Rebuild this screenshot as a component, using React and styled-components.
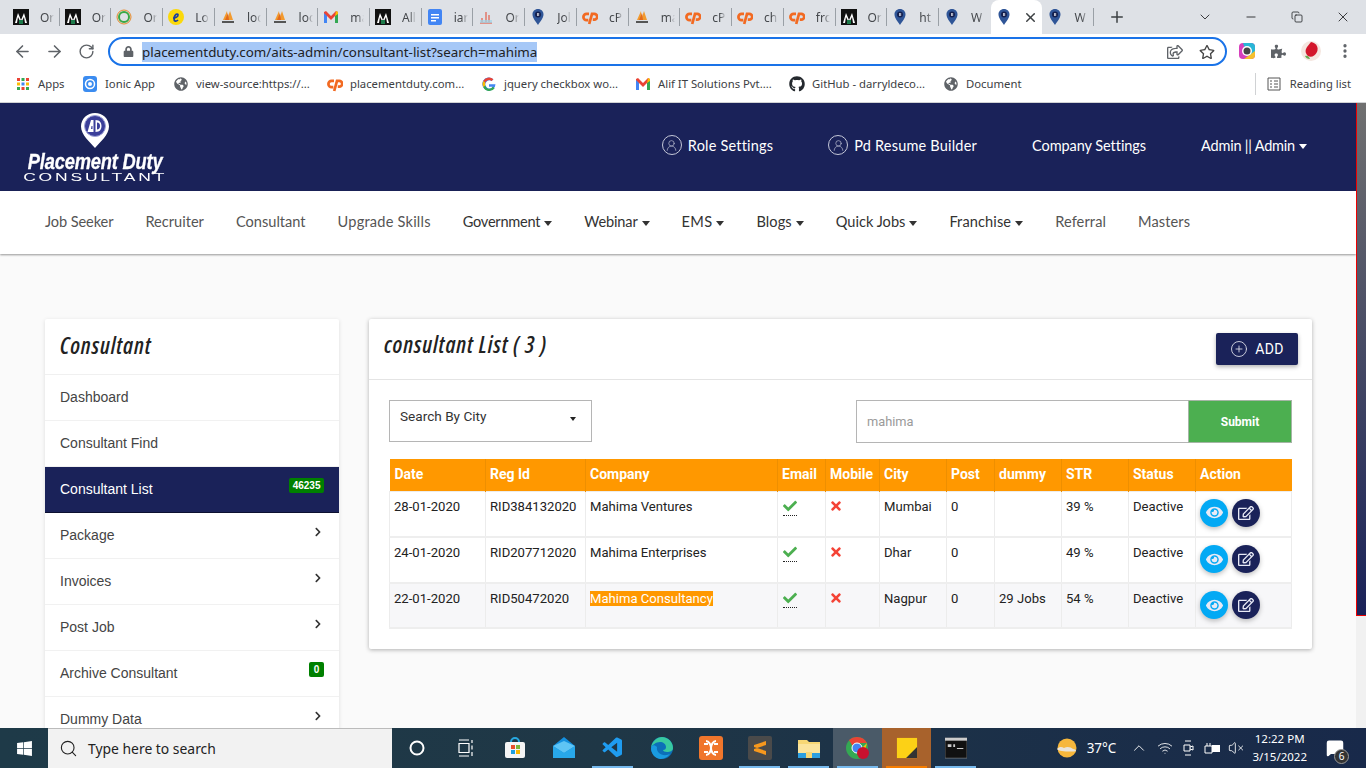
import React from "react";
import styled, { createGlobalStyle } from "styled-components";
import { FaWindows, FaGithub, FaGlobeAmericas, FaChevronRight, FaCheck, FaTimes, FaEye, FaRegEdit, FaPuzzlePiece, FaLock, FaRegStar, FaRegShareSquare } from "react-icons/fa";
import { VscVscode } from "react-icons/vsc";
import { ArrowLeft, ArrowRight, RotateCw, EllipsisVertical, Minus, X, Plus, ChevronDown, Copy, CirclePlus, UserRound, Search, ChevronUp, Wifi, VolumeX, MessageSquare } from "lucide-react";

const NAVY = "#1a2259";
const ORANGE = "#ff9800";

const Global = createGlobalStyle`
  * { box-sizing: border-box; }
  html, body { margin: 0; padding: 0; height: 100%; overflow: hidden; }
  body { font-family: "Liberation Sans", Arial, sans-serif; background: #fafafa; }
`;

const Screen = styled.div`
  width: 1366px; height: 768px; display: flex; flex-direction: column; overflow: hidden;
`;

/* Browser chrome */
const TabStrip = styled.div`
  height: 34px; background: #dee1e6; display: flex; align-items: center; padding-left: 8px; flex: none;
`;
const Tab = styled.div`
  width: 51.72px; height: 34px; display: flex; align-items: center; padding-left: 5px; position: relative; flex: none;
  background: ${p => (p.$active ? "#fff" : "transparent")};
  border-radius: ${p => (p.$active ? "8px 8px 0 0" : "0")};
  &::after {
    content: ""; position: absolute; right: 0; top: 8px; height: 18px; width: 1px;
    background: ${p => (p.$plain ? "transparent" : "#9aa0a6")};
  }
`;
const TabIcon = styled.span`
  width: 16px; height: 16px; display: flex; flex: none;
`;
const TabTitle = styled.span`
  margin-left: 11px; font: 12px "Noto Sans", sans-serif; color: #45484c; width: 14px; overflow: hidden; white-space: nowrap;
  -webkit-mask-image: linear-gradient(90deg, #000 55%, transparent);
  mask-image: linear-gradient(90deg, #000 55%, transparent);
`;
const TabClose = styled.span`
  margin-left: 11px; display: flex; color: #3c4043;
`;
const NewTab = styled.span`
  margin-left: 14px; display: flex; color: #3c4043;
`;
const WinControls = styled.div`
  margin-left: auto; display: flex; align-items: center; color: #202124; height: 100%;
`;
const WinBtn = styled.span`
  width: 46px; display: flex; justify-content: center;
`;
const Toolbar = styled.div`
  height: 34px; background: #fff; display: flex; align-items: center; flex: none; padding-left: 6px;
`;
const NavBtn = styled.span`
  width: 32px; display: flex; justify-content: center; color: ${p => p.$dim || "#5f6368"};
`;
const Omnibox = styled.div`
  width: 1119px; height: 29px; margin-left: 6px; border: 2px solid #1a73e8; border-radius: 15px; display: flex; align-items: center; padding: 1px 10px 0 13px; color: #5f6368;
`;
const UrlText = styled.span`
  margin-left: 8px; font: 13.35px/20px "Noto Sans", sans-serif; color: #202124; background: #a6c8f7; white-space: nowrap;
`;
const OmniEnd = styled.div`
  margin-left: auto; display: flex; align-items: center; gap: 16px; color: #5f6368;
`;
const ExtGroup = styled.div`
  display: flex; align-items: center; margin-left: 11px; gap: 15px; color: #5f6368;
`;
const Bookmarks = styled.div`
  height: 35px; background: #fff; display: flex; align-items: center; flex: none; padding: 0 15px 3px 15px; border-bottom: 1px solid #d0d2d4; position: relative;
`;
const Bookmark = styled.div`
  width: 154px; display: flex; align-items: center; gap: 7px; font: 11.3px "Noto Sans", sans-serif; color: #3c4043; white-space: nowrap; flex: none;
  &:first-child { width: 67px; }
  &:nth-child(2) { width: 91px; }
`;
const BmIcon = styled.span`
  width: 16px; height: 16px; display: flex; align-items: center; justify-content: center; color: #5f6368; flex: none;
`;
const Reading = styled.div`
  margin-left: auto; display: flex; align-items: center; gap: 9px; font: 11.2px "Noto Sans", sans-serif; color: #3c4043; padding-left: 11px; border-left: 1px solid #d0d2d4; height: 22px;
`;

/* Page */
const Viewport = styled.div`
  flex: 1; min-height: 0; display: flex; overflow: hidden;
`;
const Page = styled.div`
  flex: 1; min-width: 0; background: #fafafa; overflow: hidden;
`;
const ScrollTrack = styled.div`
  width: 10px; flex: none; background: #f1f1f1;
`;
const ScrollThumb = styled.div`
  height: 513px; background: linear-gradient(180deg, #707070, ${NAVY}); border: 1px solid #e00; border-top: 0; border-right: 0;
`;
const Header = styled.header`
  height: 88px; background: ${NAVY}; display: flex; align-items: flex-start; justify-content: space-between; padding: 0 49px 0 25px;
`;
const Logo = styled.div`
  width: 140px; display: flex; flex-direction: column; align-items: center; color: #fff; padding-top: 10px;
`;
const LogoName = styled.div`
  font: italic bold 22px/19px "Liberation Sans", sans-serif; white-space: nowrap; transform: scaleX(0.83); margin-top: 4px; letter-spacing: -0.2px; -webkit-text-stroke: .3px #fff;
`;
const LogoSub = styled.div`
  font: 10px/10px "Liberation Sans", sans-serif; letter-spacing: 1.6px; white-space: nowrap; transform: scaleX(1.75); margin-top: 2px;
`;
const TopLinks = styled.nav`
  display: flex; align-items: center; gap: 55px; height: 84px;
`;
const TopLink = styled.a`
  display: flex; align-items: center; gap: 6px; color: #fff; font: 14.5px Lato, sans-serif; letter-spacing: ${p => p.$ls || 0}px; white-space: nowrap;
`;
const UserRing = styled.span`
  width: 20px; height: 20px; border: 1px solid #c5c8d8; border-radius: 50%; display: flex; align-items: center; justify-content: center; color: #c5c8d8;
`;
const Caret = styled.span`
  display: inline-block; width: 0; height: 0; margin-left: 4px; vertical-align: middle; border-left: 4.5px solid transparent; border-right: 4.5px solid transparent; border-top: 5px solid currentColor;
`;
const MainNav = styled.nav`
  height: 63px; background: #fff; display: flex; align-items: center; gap: 32px; padding: 0 0 2px 45px; box-shadow: 0 1px 2px rgba(0,0,0,.4); position: relative;
`;
const MainLink = styled.a`
  font: 14.6px Lato, sans-serif; white-space: nowrap; letter-spacing: ${p => p.$ls || 0}px; color: ${p => (p.$drop ? "#333" : "#555")};
`;
const Columns = styled.div`
  display: flex; align-items: flex-start; gap: 30px; padding: 65px 44px 0 45px;
`;
const Sidebar = styled.aside`
  width: 294px; flex: none; background: #fff; border-radius: 2px; box-shadow: 0 1px 4px rgba(0,0,0,.12);
`;
const SideTitle = styled.h2`
  margin: 0; height: 56px; padding: 0 15px 4px; display: flex; align-items: center; font: italic 600 23px "Open Sans", sans-serif; font-stretch: 75%; letter-spacing: .85px; color: #222; border-bottom: 1px solid #f0f0f0;
`;
const SideRow = styled.div`
  height: 46px; padding: 0 15px 2px; display: flex; align-items: center; justify-content: space-between; font: 14px "Liberation Sans", sans-serif;
  color: ${p => (p.$active ? "#fff" : "#444")};
  background: ${p => (p.$active ? NAVY : "#fff")};
  border-bottom: 1px solid ${p => (p.$active ? "#0c1030" : "#f1f1f1")};
`;
const SideBadge = styled.span`
  background: green; color: #fff; font: bold 10px/15px "Liberation Sans", sans-serif; padding: 0 3.5px; border-radius: 2px; margin-top: -6px; min-width: 15px; text-align: center;
`;
const SideChevron = styled.span`
  display: flex; color: #333; margin: -5px 1px 0 0;
`;
const Card = styled.section`
  flex: 1; min-width: 0; background: #fff; border-radius: 2px; box-shadow: 0 1px 4px rgba(0,0,0,.3); padding-bottom: 20px;
`;
const CardHead = styled.div`
  height: 61px; display: flex; align-items: flex-start; justify-content: space-between; padding: 14px 14px 0 15px; border-bottom: 1px solid #e4e4e4;
`;
const CardTitle = styled.h1`
  margin: 0; font: italic 600 23px/22px "Open Sans", sans-serif; font-stretch: 75%; letter-spacing: .85px; color: #222; white-space: nowrap;
`;
const AddButton = styled.button`
  width: 82px; height: 32px; border: 0; border-radius: 2px; background: ${NAVY}; color: #fff; display: flex; align-items: center; justify-content: center; gap: 7px; padding: 0 0 1px; font: 14px Roboto, sans-serif; letter-spacing: .3px; box-shadow: 0 2px 4px rgba(0,0,0,.3);
  svg { color: #d7d8e4; }
`;
const CardBody = styled.div`
  padding: 20px 20px 0;
`;
const Filters = styled.div`
  display: flex; justify-content: space-between; align-items: flex-start; margin-bottom: 16px;
`;
const SelectBox = styled.div`
  width: 203px; height: 42px; border: 1px solid #b5b5b5; padding: 7px 10px; font: 13.6px Roboto, sans-serif; color: #333; display: flex; justify-content: space-between;
`;
const SelectCaret = styled.span`
  width: 0; height: 0; margin: 9px 5px 0 0; border-left: 3.5px solid transparent; border-right: 3.5px solid transparent; border-top: 4px solid #222;
`;
const SearchGroup = styled.div`
  display: flex; height: 43px;
`;
const SearchInput = styled.div`
  width: 332px; border: 1px solid #b5b5b5; border-right: 0; padding: 0 10px; display: flex; align-items: center; font: 12.8px Roboto, sans-serif; color: #9a9a9a;
`;
const SubmitButton = styled.button`
  width: 104px; border: 1px solid #a5b5a5; background: #4caf50; color: #fff; font: bold 12px Roboto, sans-serif;
`;
const Table = styled.table`
  width: 902px; border-collapse: collapse; table-layout: fixed; font: 13.1px Roboto, sans-serif; color: #222;
`;
const Th = styled.th`
  height: 32px; background: ${ORANGE}; color: #fff; font: bold 14px Roboto, sans-serif; text-align: left; padding: 0 4px 1px; border-left: 1px solid #ee8f00; white-space: nowrap;
  &:first-child { border-left: 0; padding-left: 5px; }
`;
const Tr = styled.tr`
  height: 46px; background: ${p => (p.$alt ? "#f7f7f9" : "#fff")};
  &:last-child { height: 45px; }
`;
const Td = styled.td`
  vertical-align: top; padding: 7px 4px 0 4px; border: 1px solid #ececec; border-bottom: 2px solid #eee; white-space: nowrap;
`;
const Mark = styled.mark`
  background: ${ORANGE}; color: #fff;
`;
const CheckAbbr = styled.abbr`
  display: inline-flex; color: #4caf50; border-bottom: 1px dotted #222; padding-bottom: 2px; width: 14px; margin-left: 1px;
`;
const Cross = styled.span`
  display: inline-flex; color: #f44336; margin-left: -1px;
`;
const Actions = styled.div`
  display: flex; gap: 4px;
`;
const RoundBtn = styled.span`
  width: 28px; height: 28px; border-radius: 50%; display: flex; align-items: center; justify-content: center; color: #e8eaf6; background: ${p => p.$bg}; box-shadow: 0 2px 5px rgba(0,0,0,.25);
`;

/* Taskbar */
const Taskbar = styled.div`
  height: 40px; flex: none; background: linear-gradient(90deg, #1e3a48, #1f3746 45%, #18294a); display: flex; align-items: stretch; color: #fff;
`;
const StartBtn = styled.span`
  width: 48px; display: flex; align-items: center; justify-content: center;
`;
const SearchBar = styled.div`
  width: 344px; background: #f2f2f2; display: flex; align-items: center; gap: 10px; padding-left: 11px; color: #222; font: 13.9px "Noto Sans", sans-serif; border-top: 1px solid #bbb;
`;
const Tray = styled.div`
  display: flex; align-items: stretch;
`;
const TaskItem = styled.span`
  width: 49px; display: flex; align-items: center; justify-content: center; position: relative; flex: none;
  background: ${p => p.$bg || "transparent"};
  &::after {
    content: ""; position: absolute; left: 4px; right: 4px; bottom: 0; height: 2px;
    background: ${p => p.$line || "transparent"};
  }
`;
const SysArea = styled.div`
  margin-left: auto; display: flex; align-items: center; color: #fff; font: 15px "Noto Sans", sans-serif; padding-right: 22px;
`;
const Temp = styled.span`
  margin: 0 14px 0 10px; font-size: 13.5px;
`;
const SysIcons = styled.div`
  display: flex; align-items: center; gap: 7px; margin-right: 8px;
  & > svg:first-child { margin-right: 2px; }
`;
const Clock = styled.div`
  display: flex; flex-direction: column; align-items: center; font: 11.5px/18px "Noto Sans", sans-serif; margin-right: 19px;
`;
const Notif = styled.span`
  position: relative; display: flex;
`;
const NotifBadge = styled.span`
  position: absolute; right: -5px; bottom: -7px; width: 15px; height: 15px; border-radius: 50%; background: #333; border: 1px solid #999; font: 10px/13px "Noto Sans", sans-serif; text-align: center; color: #fff;
`;

/* Drawn marks */
const Svg = ({ s = 16, children, vb = "0 0 16 16" }) => <svg width={s} height={s} viewBox={vb}>{children}</svg>;
const MFav = () => <Svg><rect width="16" height="16" fill="#111" /><path d="M2 14 5 4l3 7 3-7 3 10h-2l-1-6-3 6-3-6-1 6z" fill="#fff" /><rect x="6" y="11" width="4" height="4" fill="#1c7a4a" /></Svg>;
const RingFav = () => <Svg><circle cx="8" cy="8" r="7" fill="none" stroke="#e88a2a" strokeWidth="1" /><circle cx="8" cy="8" r="5" fill="none" stroke="#3aa845" strokeWidth="2" /></Svg>;
const EFav = () => <Svg><circle cx="8" cy="8" r="8" fill="#fbd90b" /><path d="M5 9c2 0 5-1 5-3 0-1.400-2-1-3 .5S5.500 11 7 12c1 .500 2 0 3-1" fill="none" stroke="#1b3fa0" strokeWidth="1.700" /></Svg>;
const PmaFav = () => <Svg><path d="M3 11 7 2l1 9zM7 11l3-9 3 9z" fill="#f29a2e" /><path d="M5 11 8 4l1 7z" fill="#e2691c" /><rect x="2" y="12" width="12" height="2" fill="#555" /></Svg>;
const GmailFav = () => <Svg><path d="M1 14V3l2-1 5 5 5-5 2 1v11h-3V7L8 11 4 7v7z" fill="#ea4335" /><path d="M1 14V4l3 3v7z" fill="#4285f4" /><path d="M15 14V4l-3 3v7z" fill="#34a853" /><path d="M13 2l2 1v2l-3 2z" fill="#fbbc04" /></Svg>;
const DocsFav = () => <Svg><rect x="1" width="14" height="16" rx="2" fill="#4285f4" /><path d="M4 5h8v1.500H4zM4 8h8v1.500H4zM4 11h5v1.500H4z" fill="#fff" /></Svg>;
const ChartFav = () => <Svg><path d="M2 14h12M4 13V9M8 13V3M11 13V6" stroke="#e2786a" strokeWidth="1.500" fill="none" /><path d="M2 11h12v3H2z" fill="#9fd4e8" opacity=".7" /></Svg>;
const PinFav = () => <Svg><path d="M8 0c3.300 0 5.500 2.400 5.500 5.500C13.500 9 10 13 8 16 6 13 2.500 9 2.500 5.500 2.500 2.400 4.700 0 8 0z" fill="#2f5597" /><circle cx="8" cy="5.500" r="3" fill="#14204f" /><path d="M7 4h.7v3H7zM8.400 4h.7v3h-.7z" fill="#fff" /></Svg>;
const CpFav = () => <Svg><path d="M7 4.800H4.600a3.200 3.200 0 0 0 0 6.400H6.300M7.200 15 10 4.800h2.300a2.900 2.900 0 0 1 0 5.800H10.800" fill="none" stroke="#f26a22" strokeWidth="2.700" /></Svg>;
const AppsIcon = () => (
  <Svg>{[0, 1, 2].flatMap(r => [0, 1, 2].map(c => <rect key={`${r}${c}`} x={2 + c * 4.500} y={2 + r * 4.500} width="3" height="3" fill={["#ea4335", "#fbbc04", "#34a853", "#4285f4"][(r + c * 2) % 4]} />))}</Svg>
);
const IonicIcon = () => <Svg><rect x="1" width="14" height="16" rx="3" fill="#3b8cf0" /><circle cx="8" cy="8" r="4.500" fill="none" stroke="#fff" strokeWidth="1.500" /><circle cx="8" cy="8" r="2" fill="#fff" /></Svg>;
const GoogleIcon = () => <Svg><path d="M14.500 8.200H8v2.500h3.700A4 4 0 1 1 10.600 5l1.800-1.800A6.600 6.600 0 1 0 14.500 8.200z" fill="#4285f4" /><path d="M2.200 5 4.300 6.600A4 4 0 0 1 10.600 5l1.800-1.800A6.600 6.600 0 0 0 2.200 5z" fill="#ea4335" /><path d="M2.200 11 4.300 9.400a4 4 0 0 0 7.400 1.300l2 1.500A6.600 6.600 0 0 1 2.200 11z" fill="#34a853" /><path d="M2.200 5a6.600 6.600 0 0 0 0 6l2.100-1.600a4 4 0 0 1 0-2.800z" fill="#fbbc04" /></Svg>;
const ReadingIcon = () => <Svg s={14} vb="0 0 14 14"><path d="M1 1h12v12H1zM3 4h2M3 7h2M3 10h2M7 4h4M7 7h4M7 10h4" fill="none" stroke="#555" /></Svg>;
const LogoPin = () => (
  <svg width="28" height="35" viewBox="0 0 28 35">
    <path d="M14 0c7.700 0 14 5.800 14 13.500C28 22 19 29 14 35 9 29 0 22 0 13.500 0 5.800 6.300 0 14 0z" fill="#fff" />
    <circle cx="14" cy="13" r="10.500" fill="#3b3f9a" stroke="#9ea2d8" />
    <path d="M6.500 19 10 7h2.500v12zM14.500 7c4.500 0 6 3 6 6s-1.500 6-6 6z" fill="#fff" />
    <path d="M10.500 13h1v3h-1.500zM16 9.500c2 0 3 1.500 3 3.500s-1 3.500-3 3.500z" fill="#3b3f9a" />
  </svg>
);
const RedAvatar = () => <Svg s={20} vb="0 0 20 20"><circle cx="10" cy="10" r="10" fill="#f5e6e0" /><path d="M10 1c5 1 8 5 6 10-2 4-6 6-9 4-3-3-3-6-1-9z" fill="#d3162b" /><path d="M4 15c2-1 4 0 5 3-3 0-4-1-5-3z" fill="#6aa84f" /></Svg>;
const ColorExt = () => <Svg s={18} vb="0 0 18 18"><rect x="1" y="1" width="16" height="16" rx="4" fill="#d63fbd" /><path d="M5 1h8a4 4 0 0 1 4 4v8H9z" fill="#29b6d6" /><path d="M17 9v4a4 4 0 0 1-4 4H6z" fill="#f6c02c" /><circle cx="9" cy="9" r="5" fill="#fff" /><circle cx="9" cy="9" r="3.500" fill="#444" /></Svg>;

const Store = () => <Svg s={24} vb="0 0 24 24"><path d="M8 6a4 4 0 0 1 8 0" fill="none" stroke="#27a8e0" strokeWidth="2" /><rect x="2" y="6" width="20" height="16" rx="2" fill="#f5f5f5" /><rect x="8" y="9" width="4" height="4" fill="#e8502c" /><rect x="13" y="9" width="4" height="4" fill="#7db83a" /><rect x="8" y="14" width="4" height="4" fill="#1e9fe0" /><rect x="13" y="14" width="4" height="4" fill="#f8b600" /></Svg>;
const Mail = () => <Svg s={24} vb="0 0 24 24"><path d="M1 10 12 1l11 9v12H1z" fill="#1490df" /><path d="M1 10l11 7 11-7-11-5z" fill="#5fc5f5" /><path d="M1 10l11 7 11-7v12H1z" fill="#28a8ea" /></Svg>;
const Edge = () => <Svg s={24} vb="0 0 24 24"><circle cx="12" cy="12" r="11" fill="#0c6fb8" /><path d="M1 12C2 5 7 1 12 1c6 0 11 5 11 11 0 3-3 4-6 4-2 0-4-1-4-2 2 0 3-1 3-3 0-3-3-5-6-5-4 0-8 3-9 6z" fill="#38c9a0" /><path d="M7 11c-1 5 4 9 10 8 1 0 2-1 3-1-3 4-7 5-10 5-5-1-9-5-9-11 1-3 3-4 6-1z" fill="#1a9be0" /></Svg>;
const Xampp = () => <Svg s={24} vb="0 0 24 24"><rect width="24" height="24" rx="3" fill="#f0762c" /><path d="M7 5c3 0 5 4 5 7s2 7 5 7M17 5c-3 0-5 4-5 7s-2 7-5 7M5 8h4M15 8h4M5 16h4M15 16h4" fill="none" stroke="#fff" strokeWidth="2" /></Svg>;
const Sublime = () => <Svg s={24} vb="0 0 24 24"><rect width="24" height="24" rx="2" fill="#4a4a4a" /><path d="M6 9l12-4v4L6 13zM18 15 6 11v4l12 4z" fill="#f8981d" /></Svg>;
const Folder = () => <Svg s={24} vb="0 0 24 24"><path d="M1 4h9l2 2h11v16H1z" fill="#f7d774" /><rect x="1" y="8" width="22" height="14" fill="#fbe49c" /><rect x="1" y="17" width="22" height="5" fill="#2c9fe0" /><rect x="9" y="16" width="6" height="6" fill="#f7d774" /></Svg>;
const ChromeApp = () => <Svg s={26} vb="0 0 26 26"><circle cx="12" cy="13" r="11" fill="#34a853" /><path d="M12 2a11 11 0 0 1 10 6H12a5 5 0 0 0-4.500 3L4 5a11 11 0 0 1 8-3z" fill="#ea4335" /><circle cx="12" cy="13" r="5" fill="#4285f4" stroke="#fff" /><path d="M22 8l-3 12-5-4z" fill="#fbbc04" /><circle cx="18" cy="18" r="6" fill="#c8102e" /></Svg>;
const Sticky = () => <Svg s={22} vb="0 0 24 24"><rect x="1" y="1" width="22" height="22" fill="#fcd116" /><path d="M23 11v12H11z" fill="#333" /></Svg>;
const Cmd = () => <Svg s={22} vb="0 0 24 24"><rect x="0" y="1" width="24" height="22" fill="#111" stroke="#999" strokeWidth=".6" /><rect x="0" y="1" width="24" height="3" fill="#ccc" /><path d="M3 8h4v3H3zM9 8h2v3H9zM13 12h7v1h-7z" fill="#ccc" /></Svg>;
const TaskView = () => <Svg s={18} vb="0 0 18 18"><path d="M2 1h10M2 17h10M2 4.500h10v9H2zM15 1v3M15 6.500v4M15 13v4" fill="none" stroke="#fff" strokeWidth="1.200" /></Svg>;
const Ring = () => <Svg s={16}><circle cx="8" cy="8" r="6.500" fill="none" stroke="#fff" strokeWidth="2" /></Svg>;
const Weather = () => <Svg s={20} vb="0 0 20 20"><circle cx="10" cy="10" r="9.500" fill="#f6b73c" /><path d="M0 11c3-3 5-2 7-1 3-2 7-1 9 1 2 0 3 1 3 2-2 1-17 1-19-2z" fill="#e9e4da" /></Svg>;
const Battery = () => <Svg s={18} vb="0 0 18 18"><path d="M4 4v3M7 4v3M2 7h7v7H2z" fill="none" stroke="#fff" /><rect x="9" y="6" width="8" height="7" fill="#fff" /></Svg>;
const Meet = () => <Svg s={16}><path d="M5 1h6M5 15h6M4 5h6v6H4zM10 7l3-1v4l-3-1" fill="none" stroke="#fff" /></Svg>;

const favs = { m: MFav, r: RingFav, e: EFav, p: PmaFav, g: GmailFav, d: DocsFav, c: ChartFav, i: PinFav, x: CpFav };
const tabs = [["m","Or"],["m","Or"],["r","Or"],["e","Lo"],["p","loc"],["p","loc"],["g","ma"],["m","All"],["d","iar"],["c","Or"],["i","Jol"],["x","cP"],["p","ma"],["x","cP"],["x","ch"],["x","frc"],["m","Or"],["i","ht"],["i","W"],["i","",true],["i","W"]];
const bookmarks = [
  [<AppsIcon />, "Apps"], [<IonicIcon />, "Ionic App"], [<FaGlobeAmericas size={14} />, "view-source:https://..."],
  [<CpFav />, "placementduty.com..."], [<GoogleIcon />, "jquery checkbox wo..."], [<GmailFav />, "Alif IT Solutions Pvt...."],
  [<FaGithub size={16} color="#24292e" />, "GitHub - darryldeco..."], [<FaGlobeAmericas size={14} />, "Document"],
];
const navItems = [
  { t: "Job Seeker", ls: -0.1 }, { t: "Recruiter" }, { t: "Consultant" }, { t: "Upgrade Skills", ls: 0.2 },
  { t: "Government", d: 1, ls: -0.25 }, { t: "Webinar", d: 1, ls: -0.15 }, { t: "EMS", d: 1, ls: 0.3 }, { t: "Blogs", d: 1, ls: 0.1 },
  { t: "Quick Jobs", d: 1 }, { t: "Franchise", d: 1, ls: 0.1 }, { t: "Referral", ls: 0.1 }, { t: "Masters", ls: 0.1 },
];
const sideItems = [
  { t: "Dashboard" }, { t: "Consultant Find" }, { t: "Consultant List", a: 1, b: "46235" }, { t: "Package", c: 1 },
  { t: "Invoices", c: 1 }, { t: "Post Job", c: 1 }, { t: "Archive Consultant", b: "0" }, { t: "Dummy Data", c: 1 },
];
const cols = [96, 100, 192, 48, 54, 67, 48, 67, 67, 67, 96];
const heads = ["Date","Reg Id","Company","Email","Mobile","City","Post","dummy","STR","Status","Action"];
const rows = [
  ["28-01-2020","RID384132020","Mahima Ventures","Mumbai","0","","39 %"],
  ["24-01-2020","RID207712020","Mahima Enterprises","Dhar","0","","49 %"],
  ["22-01-2020","RID50472020",<Mark>Mahima Consultancy</Mark>,"Nagpur","0","29 Jobs","54 %"],
];

export default function App() {
  return (
    <Screen>
      <Global />
      <TabStrip>
        {tabs.map(([k, title, active], i) => {
          const F = favs[k];
          return (
            <Tab key={i} $active={active} $plain={active || i === 18}>
              <TabIcon><F /></TabIcon>
              {active ? <TabClose><X size={15} strokeWidth={2.4} /></TabClose> : <TabTitle>{title}</TabTitle>}
            </Tab>
          );
        })}
        <NewTab><Plus size={18} strokeWidth={2} /></NewTab>
        <WinControls>
          <WinBtn><ChevronDown size={16} strokeWidth={1.3} /></WinBtn>
          <WinBtn><Minus size={14} strokeWidth={1.5} /></WinBtn>
          <WinBtn><Copy size={12} strokeWidth={1.6} /></WinBtn>
          <WinBtn><X size={16} strokeWidth={1.3} /></WinBtn>
        </WinControls>
      </TabStrip>
      <Toolbar>
        <NavBtn><ArrowLeft size={19} strokeWidth={2} /></NavBtn>
        <NavBtn><ArrowRight size={19} strokeWidth={2} /></NavBtn>
        <NavBtn><RotateCw size={17} strokeWidth={2} /></NavBtn>
        <Omnibox>
          <FaLock size={11} />
          <UrlText>placementduty.com/aits-admin/consultant-list?search=mahima</UrlText>
          <OmniEnd>
            <FaRegShareSquare size={16} />
            <FaRegStar size={16} color="#444" />
          </OmniEnd>
        </Omnibox>
        <ExtGroup>
          <ColorExt />
          <FaPuzzlePiece size={15} />
          <RedAvatar />
          <EllipsisVertical size={18} strokeWidth={2.4} />
        </ExtGroup>
      </Toolbar>
      <Bookmarks>
        {bookmarks.map(([icon, label], i) => (
          <Bookmark key={i}><BmIcon>{icon}</BmIcon>{label}</Bookmark>
        ))}
        <Reading><ReadingIcon />Reading list</Reading>
      </Bookmarks>
      <Viewport>
        <Page>
          <Header>
            <Logo>
              <LogoPin />
              <LogoName>Placement Duty</LogoName>
              <LogoSub>CONSULTANT</LogoSub>
            </Logo>
            <TopLinks>
              <TopLink $ls={0.2}><UserRing><UserRound size={13} strokeWidth={1.2} /></UserRing>Role Settings</TopLink>
              <TopLink $ls={0.2}><UserRing><UserRound size={13} strokeWidth={1.2} /></UserRing>Pd Resume Builder</TopLink>
              <TopLink $ls={-0.06}>Company Settings</TopLink>
              <TopLink $ls={-0.2}><span>Admin || Admin<Caret /></span></TopLink>
            </TopLinks>
          </Header>
          <MainNav>
            {navItems.map(n => <MainLink key={n.t} $drop={n.d} $ls={n.ls}>{n.t}{n.d && <Caret />}</MainLink>)}
          </MainNav>
          <Columns>
            <Sidebar>
              <SideTitle>Consultant</SideTitle>
              {sideItems.map(s => (
                <SideRow key={s.t} $active={s.a}>
                  {s.t}
                  {s.b && <SideBadge>{s.b}</SideBadge>}
                  {s.c && <SideChevron><FaChevronRight size={10} /></SideChevron>}
                </SideRow>
              ))}
            </Sidebar>
            <Card>
              <CardHead>
                <CardTitle>consultant List ( 3 )</CardTitle>
                <AddButton><CirclePlus size={18} strokeWidth={1.2} />ADD</AddButton>
              </CardHead>
              <CardBody>
                <Filters>
                  <SelectBox>Search By City<SelectCaret /></SelectBox>
                  <SearchGroup>
                    <SearchInput>mahima</SearchInput>
                    <SubmitButton>Submit</SubmitButton>
                  </SearchGroup>
                </Filters>
                <Table>
                  <colgroup>{cols.map((w, i) => <col key={i} width={w} />)}</colgroup>
                  <thead><tr>{heads.map(h => <Th key={h}>{h}</Th>)}</tr></thead>
                  <tbody>
                    {rows.map((r, i) => (
                      <Tr key={i} $alt={i === 2}>
                        <Td>{r[0]}</Td><Td>{r[1]}</Td><Td>{r[2]}</Td>
                        <Td><CheckAbbr><FaCheck size={14} /></CheckAbbr></Td>
                        <Td><Cross><FaTimes size={14} /></Cross></Td>
                        <Td>{r[3]}</Td><Td>{r[4]}</Td><Td>{r[5]}</Td><Td>{r[6]}</Td><Td>Deactive</Td>
                        <Td>
                          <Actions>
                            <RoundBtn $bg="#03a9f4"><FaEye size={17} /></RoundBtn>
                            <RoundBtn $bg={NAVY}><FaRegEdit size={16} /></RoundBtn>
                          </Actions>
                        </Td>
                      </Tr>
                    ))}
                  </tbody>
                </Table>
              </CardBody>
            </Card>
          </Columns>
        </Page>
        <ScrollTrack><ScrollThumb /></ScrollTrack>
      </Viewport>
      <Taskbar>
        <StartBtn><FaWindows size={17} /></StartBtn>
        <SearchBar><Search size={19} strokeWidth={1.4} />Type here to search</SearchBar>
        <Tray>
          <TaskItem><Ring /></TaskItem>
          <TaskItem><TaskView /></TaskItem>
          <TaskItem><Store /></TaskItem>
          <TaskItem><Mail /></TaskItem>
          <TaskItem $line="#76b9ed"><VscVscode size={24} color="#1f9cf0" /></TaskItem>
          <TaskItem><Edge /></TaskItem>
          <TaskItem><Xampp /></TaskItem>
          <TaskItem $line="#76b9ed"><Sublime /></TaskItem>
          <TaskItem $line="#76b9ed"><Folder /></TaskItem>
          <TaskItem $bg="#4a5a68" $line="#76b9ed"><ChromeApp /></TaskItem>
          <TaskItem $bg="#a8622c" $line="#f57c00"><Sticky /></TaskItem>
          <TaskItem $line="#76b9ed"><Cmd /></TaskItem>
        </Tray>
        <SysArea>
          <Weather />
          <Temp>37°C</Temp>
          <SysIcons>
            <ChevronUp size={18} strokeWidth={1.2} />
            <Wifi size={16} strokeWidth={1.3} />
            <Meet />
            <Battery />
            <VolumeX size={16} strokeWidth={1.3} />
          </SysIcons>
          <Clock><span>12:22 PM</span><span>3/15/2022</span></Clock>
          <Notif><MessageSquare size={18} fill="#fff" /><NotifBadge>6</NotifBadge></Notif>
        </SysArea>
      </Taskbar>
    </Screen>
  );
}
